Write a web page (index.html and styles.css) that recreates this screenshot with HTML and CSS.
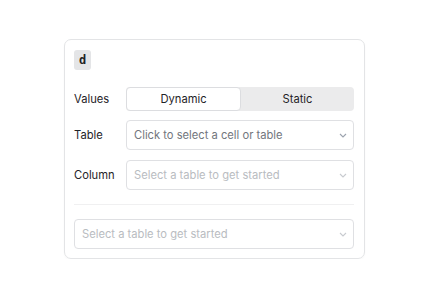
FILE: index.html
```html
<!DOCTYPE html>
<html lang="en">
<head>
    <meta charset="UTF-8">
    <title>Value Picker</title>
    <link rel="stylesheet" href="styles.css">
</head>
<body>
    <div class="card">
        <div class="badge">d</div>

        <div class="row values-row">
            <span class="label">Values</span>
            <div class="toggle">
                <button class="toggle-btn active">Dynamic</button>
                <button class="toggle-btn">Static</button>
            </div>
        </div>

        <div class="row">
            <span class="label">Table</span>
            <div class="select">
                <span class="placeholder dark">Click to select a cell or table</span>
                <svg class="chevron" width="8" height="5" viewBox="0 0 8 5"><path d="M1 1l3 3 3-3" fill="none" stroke="#9ca3af" stroke-width="1.1"/></svg>
            </div>
        </div>

        <div class="row">
            <span class="label">Column</span>
            <div class="select">
                <span class="placeholder">Select a table to get started</span>
                <svg class="chevron" width="8" height="5" viewBox="0 0 8 5"><path d="M1 1l3 3 3-3" fill="none" stroke="#c8cbd0" stroke-width="1.1"/></svg>
            </div>
        </div>

        <hr class="divider">

        <div class="select">
            <span class="placeholder">Select a table to get started</span>
            <svg class="chevron" width="8" height="5" viewBox="0 0 8 5"><path d="M1 1l3 3 3-3" fill="none" stroke="#c8cbd0" stroke-width="1.1"/></svg>
        </div>
    </div>
</body>
</html>
```

FILE: styles.css
```css
body {
    margin: 0;
    padding: 39px 0 0 64px;
    font-family: Inter, "Noto Sans", sans-serif;
    font-size: 11.2px;
    color: #1f2328;
    background: #fff;
}
.card {
    width: 280px;
    height: 198px;
    padding: 10px 10px 10px 9px;
    border: 1px solid #e3e4e6;
    border-radius: 7px;
    box-shadow: 0 1px 2px rgba(0, 0, 0, 0.03);
}
.badge {
    width: 17px;
    height: 20px;
    background: #e4e5e7;
    border-radius: 3px;
    font-family: "DejaVu Sans Mono", monospace;
    font-weight: bold;
    font-size: 12px;
    line-height: 20px;
    text-align: center;
    color: #222;
}
.row {
    display: flex;
    align-items: center;
    margin-top: 10px;
}
.values-row {
    margin-top: 17px;
    margin-bottom: -1px;
}
.label {
    width: 52px;
    flex: none;
}
.toggle {
    flex: 1;
    display: flex;
    height: 24px;
    background: #ebebec;
    border-radius: 4px;
}
.toggle-btn {
    flex: 1;
    border: none;
    background: transparent;
    font-family: inherit;
    font-size: 11.2px;
    color: #1f2328;
    padding: 0;
    border-radius: 4px;
}
.toggle-btn.active {
    background: #fff;
    border: 1px solid #dcdde0;
}
.select {
    flex: 1;
    display: flex;
    align-items: center;
    justify-content: space-between;
    height: 28px;
    padding: 0 6px 0 7px;
    border: 1px solid #dfe0e3;
    border-radius: 4px;
}
.placeholder {
    color: #b9bcc1;
}
.placeholder.dark {
    color: #72767d;
}
.divider {
    border: none;
    border-top: 1px solid #f0f0f1;
    margin: 14px 0;
}
```
